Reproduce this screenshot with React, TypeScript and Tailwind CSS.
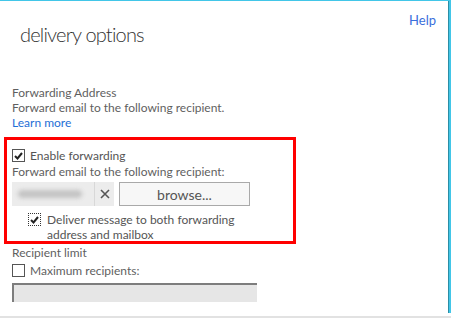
import { useState } from "react";

const font = { fontFamily: 'Lato, "Noto Sans", sans-serif' };

function CheckBox({ checked, focused }: { checked: boolean; focused?: boolean }) {
  return (
    <span
      className={
        focused
          ? "flex h-[13px] w-[13px] shrink-0 items-center justify-center border border-dotted border-[#333]"
          : "flex h-[13px] w-[13px] shrink-0 items-center justify-center border border-[#555] bg-white"
      }
    >
      {checked && (
        <svg width="9" height="8" viewBox="0 0 9 8">
          <path d="M1 4 L3.5 6.5 L8 1" fill="none" stroke="#222" strokeWidth="2" />
        </svg>
      )}
    </span>
  );
}

export default function App() {
  const [forward, setForward] = useState(true);
  const [both, setBoth] = useState(true);
  const [limit, setLimit] = useState(false);

  return (
    <div
      className="flex h-[318px] w-[451px] flex-col overflow-hidden bg-white text-[12px] leading-[15px] text-[#5f5f5f]"
      style={font}
    >
      <div className="flex h-[313px] shrink-0 border-t border-[#42c6e8]">
        {/* main panel */}
        <div className="min-w-0 flex-1 overflow-hidden">
          <div className="flex items-start justify-between pr-[12px]">
            <h1 className="ml-[20px] mt-[21px] text-[20px] font-light leading-[24px] tracking-[-0.8px] text-[#333]">
              delivery options
            </h1>
            <a className="mt-[11px] text-[13px] leading-[16px] text-[#3b6fdc]">Help</a>
          </div>

          <div className="ml-[12px] mt-[39px]">
            <div>Forwarding Address</div>
            <div>Forward email to the following recipient.</div>
            <a className="text-[#1f6fd6]">Learn more</a>
          </div>

          {/* highlighted forwarding section */}
          <div className="ml-[4px] mt-[7px] h-[107px] w-[292px] border-[3px] border-[#ff0000] pl-[5px] pt-[8px]">
            <label className="flex items-center gap-[5px]" onClick={() => setForward(!forward)}>
              <CheckBox checked={forward} />
              <span className="text-[#555]">Enable forwarding</span>
            </label>
            <div className="mt-[1px]">Forward email to the following recipient:</div>
            <div className="mt-[3px] flex h-[24px] items-stretch">
              <div className="flex w-[82px] items-center bg-[#ececec] pl-[6px]">
                <span className="h-[8px] w-[64px] rounded-full bg-[#c4c4c4] blur-[2px]" />
              </div>
              <div className="flex w-[20px] items-center justify-center border-l border-[#d8d8d8] bg-[#ececec]">
                <svg width="10" height="10" viewBox="0 0 10 10">
                  <path d="M1 1 L9 9 M9 1 L1 9" stroke="#555" strokeWidth="1.6" />
                </svg>
              </div>
              <button className="ml-[5px] w-[131px] border border-[#a9a9a9] bg-[#f7f7f7] text-[14px] text-[#555]">
                browse...
              </button>
            </div>
            <label className="ml-[16px] mt-[6px] flex items-start gap-[6px]" onClick={() => setBoth(!both)}>
              <span className="mt-[1px]">
                <CheckBox checked={both} focused />
              </span>
              <span className="text-[#555]">
                Deliver message to both forwarding
                <br />
                address and mailbox
              </span>
            </label>
          </div>

          <div className="ml-[12px] mt-[1px]">
            <div>Recipient limit</div>
            <label className="mt-[3px] flex items-center gap-[5px]" onClick={() => setLimit(!limit)}>
              <CheckBox checked={limit} />
              <span>Maximum recipients:</span>
            </label>
            <div className="mt-[5px] h-[19px] w-[245px] border-l-2 border-t-2 border-[#7d7d7d] bg-[#e6e6e6]" />
          </div>
        </div>
        {/* window edge */}
        <div className="w-[1px] bg-[#2b8ea5]" />
        <div className="w-[2px] bg-[#42c6e8]" />
      </div>
      <div className="mt-[3px] h-[2px] shrink-0 bg-[#e2e2e2]" />
    </div>
  );
}
